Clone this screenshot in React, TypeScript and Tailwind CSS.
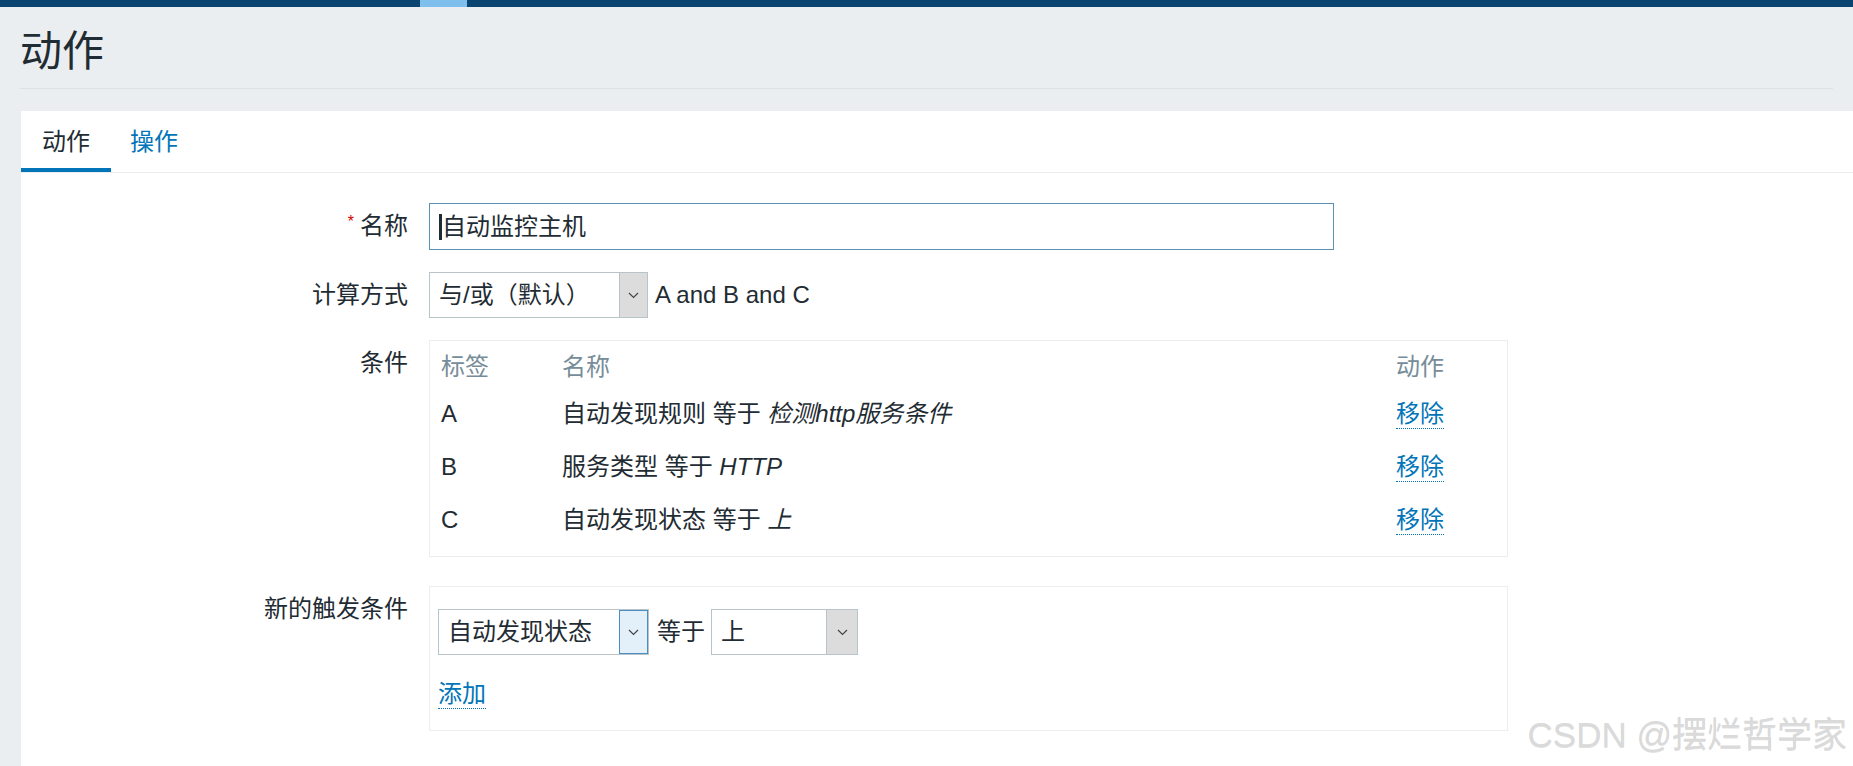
import React from "react"

const FONT = '"Liberation Sans", Arial, "Noto Sans CJK SC", sans-serif'

function Chevron() {
  return (
    <svg width="11" height="7" viewBox="0 0 11 7" fill="none">
      <path d="M1 1l4.5 4.5L10 1" stroke="#444" strokeWidth="1.2" />
    </svg>
  )
}

function Select({
  value,
  width,
  btnWidth,
  focused = false,
}: {
  value: string
  width: string
  btnWidth: string
  focused?: boolean
}) {
  return (
    <div className={`flex h-[46px] border border-[#b9c4ca] bg-white ${width}`}>
      <div className="flex flex-1 items-center pl-[9px] text-[#1f2c33]">{value}</div>
      <div
        className={`flex items-center justify-center ${btnWidth} ${
          focused ? "border border-[#4a8fc4] bg-[#e3eff9]" : "border-l border-[#b9c4ca] bg-[#dcdcdc]"
        }`}
      >
        <Chevron />
      </div>
    </div>
  )
}

function LinkText({ children }: { children: React.ReactNode }) {
  return (
    <span className="inline-block border-b border-dotted border-[#0275b8] leading-[28px] text-[#0275b8]">
      {children}
    </span>
  )
}

function FormRow({ label, required = false, children }: { label: string; required?: boolean; children: React.ReactNode }) {
  return (
    <div className="flex items-start">
      <div className="flex h-[46px] w-[387px] shrink-0 items-center justify-end text-[#1f2c33]">
        {required && <span className="mr-[6px] -mt-[8px] text-[16px] text-[#d40000]">*</span>}
        {label}
      </div>
      <div className="ml-[21px] flex-1">{children}</div>
    </div>
  )
}

const conditions = [
  { tag: "A", name: "自动发现规则 等于 ", value: "检测http服务条件" },
  { tag: "B", name: "服务类型 等于 ", value: "HTTP" },
  { tag: "C", name: "自动发现状态 等于 ", value: "上" },
]

export default function App() {
  return (
    <div className="relative flex h-[766px] w-full flex-col overflow-hidden bg-[#ebeef0] text-[24px]" style={{ fontFamily: FONT }}>
      {/* top bar */}
      <div className="flex h-[7px] shrink-0 bg-[#0a4470]">
        <div className="w-[420px]" />
        <div className="w-[47px] bg-[#7fbfee]" />
      </div>

      {/* header */}
      <div className="mx-[20px] flex h-[82px] shrink-0 items-center border-b border-[#dce1e4] pt-[8px]">
        <h1 className="text-[42px] leading-none text-[#1f2c33]">动作</h1>
      </div>

      {/* panel */}
      <div className="ml-[21px] mt-[22px] flex-1 bg-white">
        <div className="flex h-[62px] border-b border-[#ebeef0]">
          <div className="flex h-full items-center border-b-4 border-[#0275b8] px-[21px] pt-[4px] text-[#1f2c33]">动作</div>
          <div className="flex h-full items-center pl-[19px] pr-[21px] text-[#0275b8]">操作</div>
        </div>

        <div className="flex flex-col pt-[30px]">
          <FormRow label="名称" required>
            <div className="flex h-[47px] w-[905px] items-center border border-[#5b8fb3] pl-[9px] text-[#1f2c33]">
              <span className="h-[26px] w-[3px] bg-[#1f2c33]" />
              自动监控主机
            </div>
          </FormRow>

          <div className="mt-[22px]">
            <FormRow label="计算方式">
              <div className="flex items-center gap-[7px]">
                <Select value="与/或（默认）" width="w-[219px]" btnWidth="w-[28px]" />
                <span className="text-[#1f2c33]">A and B and C</span>
              </div>
            </FormRow>
          </div>

          <div className="mt-[22px]">
            <FormRow label="条件">
              <div className="w-[1079px] border border-[#ebeef0] px-[11px] pb-[10px] pt-[6px]">
                <div className="grid h-[40px] grid-cols-[121px_1fr_100px] items-center text-[#768d99]">
                  <span>标签</span>
                  <span>名称</span>
                  <span>动作</span>
                </div>
                {conditions.map((c) => (
                  <div key={c.tag} className="grid h-[53px] grid-cols-[121px_1fr_100px] items-center text-[#1f2c33]">
                    <span>{c.tag}</span>
                    <span>
                      {c.name}
                      <i>{c.value}</i>
                    </span>
                    <span>
                      <LinkText>移除</LinkText>
                    </span>
                  </div>
                ))}
              </div>
            </FormRow>
          </div>

          <div className="mt-[29px]">
            <FormRow label="新的触发条件">
              <div className="w-[1079px] border border-[#ebeef0] pb-[18px] pl-[8px] pt-[22px]">
                <div className="flex items-center">
                  <Select value="自动发现状态" width="w-[211px]" btnWidth="w-[29px]" focused />
                  <span className="ml-[8px] mr-[6px] text-[#1f2c33]">等于</span>
                  <Select value="上" width="w-[147px]" btnWidth="w-[31px]" />
                </div>
                <div className="mt-[21px]">
                  <LinkText>添加</LinkText>
                </div>
              </div>
            </FormRow>
          </div>
        </div>
      </div>

      {/* watermark */}
      <div className="absolute bottom-[14px] right-[6px] text-[35px] leading-none text-[#dadada] [text-shadow:0_1px_0_rgba(0,0,0,0.12)]">
        CSDN @摆烂哲学家
      </div>
    </div>
  )
}
